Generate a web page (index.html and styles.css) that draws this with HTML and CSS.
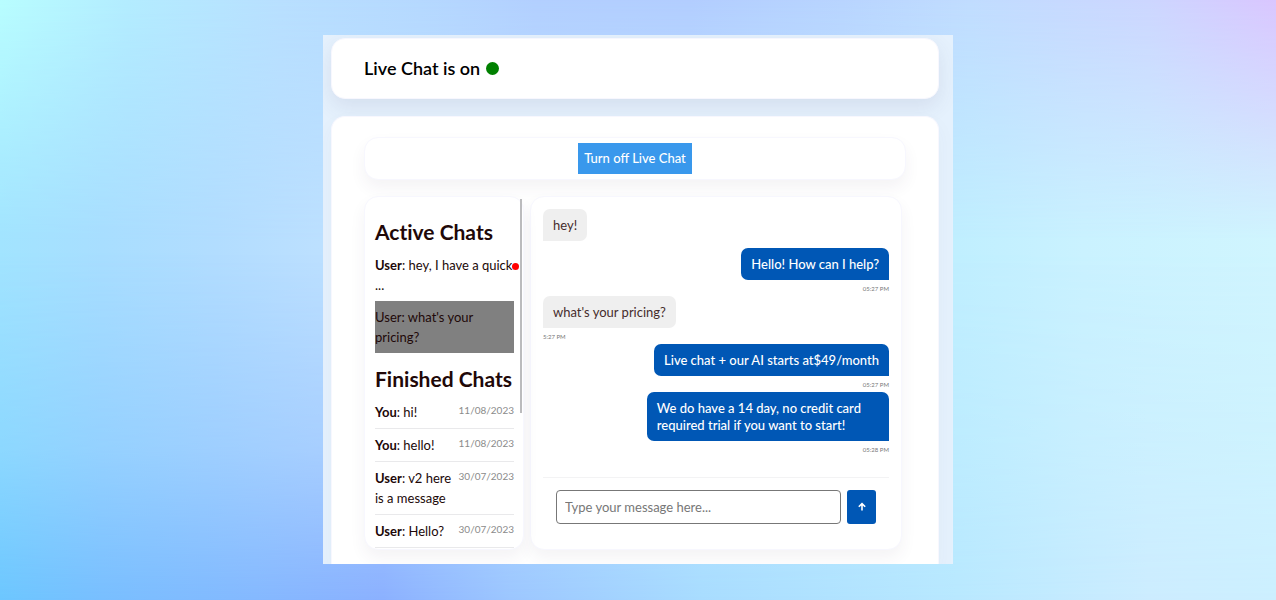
FILE: index.html
```html
<!DOCTYPE html>
<html lang="en">
<head>
<meta charset="utf-8">
<meta name="viewport" content="width=device-width, initial-scale=1">
<title>Live Chat</title>
<link rel="stylesheet" href="styles.css">
</head>
<body>
<main class="frame">
  <header class="card status">
    <h1 class="status-title">Live Chat is on</h1>
    <span class="status-dot"></span>
  </header>
  <section class="card workspace">
    <div class="panel toolbar">
      <button class="toggle" type="button">Turn off Live Chat</button>
    </div>
    <div class="columns">
      <aside class="panel sidebar">
        <h2 class="list-title">Active Chats</h2>
        <ul class="list">
          <li class="item unread"><p class="preview"><b>User</b>: hey, I have a quick<br>...</p></li>
          <li class="item selected"><p class="preview">User: what's your<br>pricing?</p></li>
        </ul>
        <h2 class="list-title">Finished Chats</h2>
        <ul class="list finished">
          <li class="item"><p class="preview"><b>You</b>: hi!</p><time class="date">11/08/2023</time></li>
          <li class="item"><p class="preview"><b>You</b>: hello!</p><time class="date">11/08/2023</time></li>
          <li class="item"><p class="preview"><b>User</b>: v2 here<br>is a message</p><time class="date">30/07/2023</time></li>
          <li class="item"><p class="preview"><b>User</b>: Hello?</p><time class="date">30/07/2023</time></li>
        </ul>
      </aside>
      <section class="panel chat">
        <div class="messages">
          <p class="bubble first">hey!</p>
          <p class="bubble own">Hello! How can I help?</p>
          <time class="stamp own-stamp">05:27 PM</time>
          <p class="bubble">what's your pricing?</p>
          <time class="stamp">5:27 PM</time>
          <p class="bubble own">Live chat + our AI starts at$49/month</p>
          <time class="stamp own-stamp">05:27 PM</time>
          <p class="bubble own wide">We do have a 14 day, no credit card<br>required trial if you want to start!</p>
          <time class="stamp own-stamp">05:28 PM</time>
        </div>
        <form class="composer">
          <input class="field" type="text" aria-label="Message" placeholder="Type your message here...">
          <button class="send" type="button" aria-label="Send">
            <svg width="8" height="10" viewBox="0 0 8 10" fill="none" stroke="#fff" stroke-width="1.6"><path d="M4 8.6V1.5M.8 4.8 4 1.6l3.2 3.2"/></svg>
          </button>
        </form>
      </section>
    </div>
  </section>
</main>
</body>
</html>
```
FILE: styles.css
```css
* { box-sizing: border-box; }
body {
  position: relative;
  margin: 0;
  padding-bottom: 2px;
  min-height: 100vh;
  display: flex;
  align-items: center;
  justify-content: center;
  font-family: Lato, "Liberation Sans", sans-serif;
  font-size: 13px;
  color: #210808;
  background: linear-gradient(90deg, #a2e4ff, #a8deff 8%, #b2ddff 17%, #bce0ff 25%, #c0efff 75%, #caf2ff 85%, #d0f5fe);
}
/* The backdrop blends a top and a bottom colour band over the middle one. */
body::before, body::after {
  content: "";
  position: absolute;
  inset: 0;
  z-index: -1;
}
body::before {
  background: linear-gradient(90deg, #b8fdff, #b3ecff 10%, #b8dfff 22%, #b5d8ff 33%, #b2cfff 42%, #b2cdff 54%, #b8d4ff 66%, #c0dcff 76%, #ccd6ff 90%, #d9c6ff);
  mask-image: linear-gradient(#000, #0000 40%);
}
body::after {
  background: linear-gradient(90deg, #6cc6ff, #78beff 8%, #84b8ff 20%, #8bb0ff 30%, #9cc6ff 40%, #a8dcff 55%, #b8e8ff 75%, #ccecff 90%, #ccefff);
  mask-image: linear-gradient(#0000 42%, #0006 75%, #000);
}
h1, h2, p, ul { margin: 0; padding: 0; }
ul { list-style: none; }
button, input { font: inherit; }
.frame {
  width: 630px;
  max-width: 100%;
  padding: 3px 14px 0 8px;
  background: #e5f1fd;
  overflow: hidden;
}
.card, .panel {
  background: #fff;
  border: 1px solid #f7f7fe;
  border-radius: 14px;
}
.status {
  display: flex;
  align-items: center;
  gap: 6px;
  padding: 15px 32px;
  box-shadow: 0 8px 20px #4040701a;
}
.status-title {
  font-size: 18px;
  line-height: 29px;
  font-weight: 600;
  color: #000;
}
.status-dot {
  width: 13px;
  height: 13px;
  border-radius: 50%;
  background: #008000;
}
.workspace {
  margin-top: 17px;
  padding: 20px 32px 14px;
  border-bottom: 0;
  border-radius: 14px 14px 0 0;
  box-shadow: 0 8px 20px #4040700a;
}
.panel { box-shadow: 0 8px 16px #4030500f; }
.toolbar {
  display: flex;
  justify-content: center;
  padding: 5px;
}
.toggle {
  padding: 0 6px;
  border: 0;
  line-height: 31px;
  color: #fff;
  background: #3998ec;
  font-weight: 500;
}
.columns {
  display: flex;
  gap: 6px;
  margin: 16px 4px 0 0;
}
.sidebar {
  position: relative;
  flex: 0 0 160px;
  padding: 9px 9px 1px 10px;
}
.sidebar::after {
  content: "";
  position: absolute;
  top: 2px;
  right: 1px;
  width: 2px;
  height: 61%;
  background: #bbbbbd;
}
.list-title {
  margin: 11px 0 2px;
  font-size: 21px;
  line-height: 30px;
  font-weight: 700;
  font-variant-ligatures: none;
  white-space: nowrap;
}
.item {
  position: relative;
  display: flex;
  justify-content: space-between;
  padding: 6px 0;
}
.preview {
  line-height: 20px;
  white-space: nowrap;
}
.unread::after {
  content: "";
  position: absolute;
  top: 14px;
  right: -5px;
  width: 7px;
  height: 7px;
  border-radius: 50%;
  background: red;
}
.selected { background: #808080; }
.finished .item { border-bottom: 1px solid #e9e9eb; }
.date {
  font-size: 10px;
  line-height: 17px;
  color: #8b8b8b;
}
.chat {
  display: flex;
  flex: 1;
  flex-direction: column;
  justify-content: space-between;
  padding: 12px 12px 13px;
}
.messages {
  display: flex;
  flex-direction: column;
  align-items: flex-start;
}
.bubble {
  padding: 8px 10px 7px;
  border-radius: 7px 7px 7px 0;
  line-height: 17px;
  color: #452c2c;
  background: #efefef;
}
.first { margin-bottom: 7px; }
.own {
  align-self: flex-end;
  border-radius: 7px 7px 0 7px;
  color: #fff;
  background: #0057b5;
  font-weight: 500;
}
.wide { width: 70%; }
.stamp {
  padding-top: 2px;
  font-size: 6px;
  line-height: 14px;
  color: #777;
}
.own-stamp { align-self: flex-end; }
.composer {
  display: flex;
  gap: 6px;
  padding: 12px 13px;
  border-top: 1px solid #f3f3f4;
}
.field {
  flex: 1;
  min-width: 0;
  height: 34px;
  padding: 0 8px;
  border: 1px solid #777;
  border-radius: 4px;
  background: #fff;
}
.field::placeholder { color: #777; }
.send {
  display: flex;
  align-items: center;
  justify-content: center;
  width: 29px;
  padding: 0;
  border: 0;
  border-radius: 3px;
  background: #0057b5;
}
```
